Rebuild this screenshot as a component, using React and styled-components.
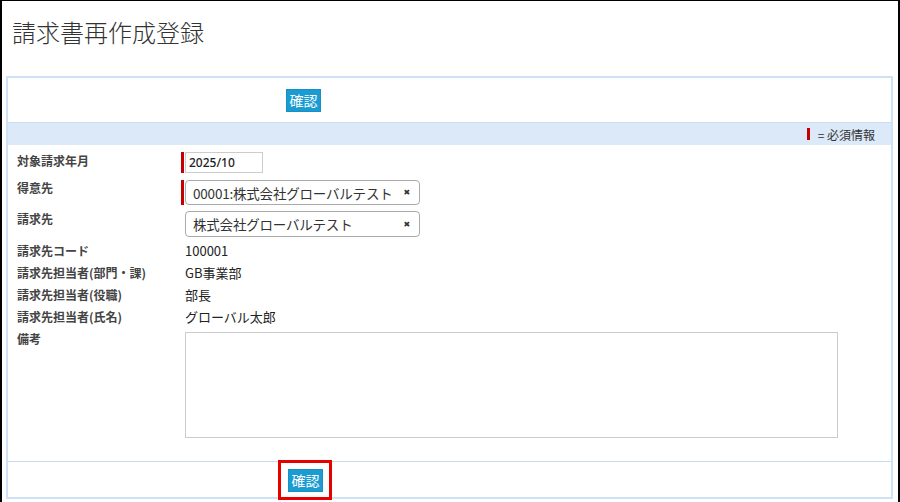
import styled, { createGlobalStyle } from "styled-components";

const GlobalStyle = createGlobalStyle`
  html, body {
    margin: 0;
    padding: 0;
    background: #fff;
  }
  body {
    font-family: "Noto Sans CJK JP", "Noto Sans", "Liberation Sans", sans-serif;
    color: #333;
  }
`;

const Page = styled.div`
  box-sizing: border-box;
  width: 900px;
  height: 502px;
  border: 2px solid #000;
  border-top-width: 1px;
  border-bottom: none;
  overflow: hidden;
`;

const Title = styled.h1`
  margin: 0;
  height: 75px;
  padding: 14px 0 0 10px;
  box-sizing: border-box;
  font-size: 24px;
  line-height: 34px;
  font-weight: 300;
  color: #333;
`;

const Panel = styled.div`
  margin: 0 5px 0 4px;
  border: 2px solid #cfe2f5;
`;

const ButtonBar = styled.div`
  display: flex;
  padding: ${(p) => (p.bottom ? "7px 0 5px 280px" : "11px 0 10px 278px")};
  border-top: ${(p) => (p.bottom ? "1px solid #c6ddf3" : "none")};
  border-bottom: ${(p) => (p.bottom ? "none" : "1px solid #c6ddf3")};
`;

const Highlight = styled.div`
  position: relative;
  display: flex;

  &::after {
    content: "";
    position: absolute;
    top: -9px;
    left: -10px;
    right: -9px;
    bottom: -8px;
    border: 3px solid #e60000;
    pointer-events: none;
  }
`;

const Button = styled.button`
  width: 35px;
  height: 23px;
  padding: 0;
  border: 1px solid #1790c4;
  background: #1a9bd2;
  color: #fff;
  font-family: inherit;
  font-size: 14px;
  line-height: 21px;
  cursor: pointer;
`;

const LegendBar = styled.div`
  display: flex;
  justify-content: flex-end;
  align-items: center;
  height: 22px;
  padding-right: 16px;
  background: #dbe9f8;
  font-size: 12px;
  color: #333;
  gap: 8px;
`;

const RedMark = styled.span`
  display: inline-block;
  width: 3px;
  height: 12px;
  background: #c40000;
`;

const Form = styled.div`
  padding: 7px 0 23px 9px;
`;

const Row = styled.div`
  display: flex;
  align-items: flex-start;
  margin-top: ${(p) => p.gap || 0}px;
`;

const Label = styled.div`
  width: 164px;
  flex-shrink: 0;
  font-size: 12px;
  font-weight: 700;
  line-height: ${(p) => p.lh || 16}px;
  color: #444;
`;

const Field = styled.div`
  display: flex;
  border-left: 3px solid ${(p) => (p.required ? "#c40000" : "transparent")};
  padding-left: 1px;
`;

const TextInput = styled.input`
  box-sizing: border-box;
  width: 78px;
  height: 21px;
  padding: 0 3px;
  border: 1px solid #ccc;
  font-family: "Noto Sans", "Liberation Sans", sans-serif;
  font-size: 12px;
  font-weight: 500;
  color: #222;
  outline: none;
`;

const Select = styled.div`
  box-sizing: border-box;
  display: flex;
  align-items: center;
  justify-content: space-between;
  width: 235px;
  height: ${(p) => p.h}px;
  padding: 0 9px 0 7px;
  border: 1px solid #aaa;
  border-radius: 4px;
  background: #fff;
  font-size: 13.5px;
  letter-spacing: -0.2px;
  white-space: nowrap;
  color: #333;
`;

const Clear = styled.span`
  font-family: "DejaVu Sans", sans-serif;
  font-size: 8px;
  color: #333;
`;

const Value = styled.div`
  padding-left: 4px;
  font-size: 13px;
  line-height: 22px;
  color: #222;
`;

const TextArea = styled.textarea`
  box-sizing: border-box;
  display: block;
  width: 653px;
  height: 106px;
  margin: 1px 0 0 4px;
  border: 1px solid #ccc;
  resize: none;
  font-family: inherit;
  outline: none;
`;

const infoRows = [
  { label: "請求先コード", value: "100001" },
  { label: "請求先担当者(部門・課)", value: "GB事業部" },
  { label: "請求先担当者(役職)", value: "部長" },
  { label: "請求先担当者(氏名)", value: "グローバル太郎" },
];

const App = () => {
  return (
    <Page>
      <GlobalStyle />
      <Title>請求書再作成登録</Title>
      <Panel>
        <ButtonBar>
          <Button>確認</Button>
        </ButtonBar>
        <LegendBar>
          <RedMark />
          <span>= 必須情報</span>
        </LegendBar>
        <Form>
          <Row>
            <Label lh={18}>対象請求年月</Label>
            <Field required>
              <TextInput defaultValue="2025/10" />
            </Field>
          </Row>
          <Row gap={7}>
            <Label>得意先</Label>
            <Field required>
              <Select h={25}>
                <span>00001:株式会社グローバルテスト</span>
                <Clear>✖</Clear>
              </Select>
            </Field>
          </Row>
          <Row gap={6}>
            <Label>請求先</Label>
            <Field>
              <Select h={26}>
                <span>株式会社グローバルテスト</span>
                <Clear>✖</Clear>
              </Select>
            </Field>
          </Row>
          {infoRows.map((r, i) => (
            <Row key={r.label} gap={i === 0 ? 3 : 0}>
              <Label lh={22}>{r.label}</Label>
              <Value>{r.value}</Value>
            </Row>
          ))}
          <Row gap={3}>
            <Label>備考</Label>
            <TextArea />
          </Row>
        </Form>
        <ButtonBar bottom>
          <Highlight>
            <Button>確認</Button>
          </Highlight>
        </ButtonBar>
      </Panel>
    </Page>
  );
};

export default App;
